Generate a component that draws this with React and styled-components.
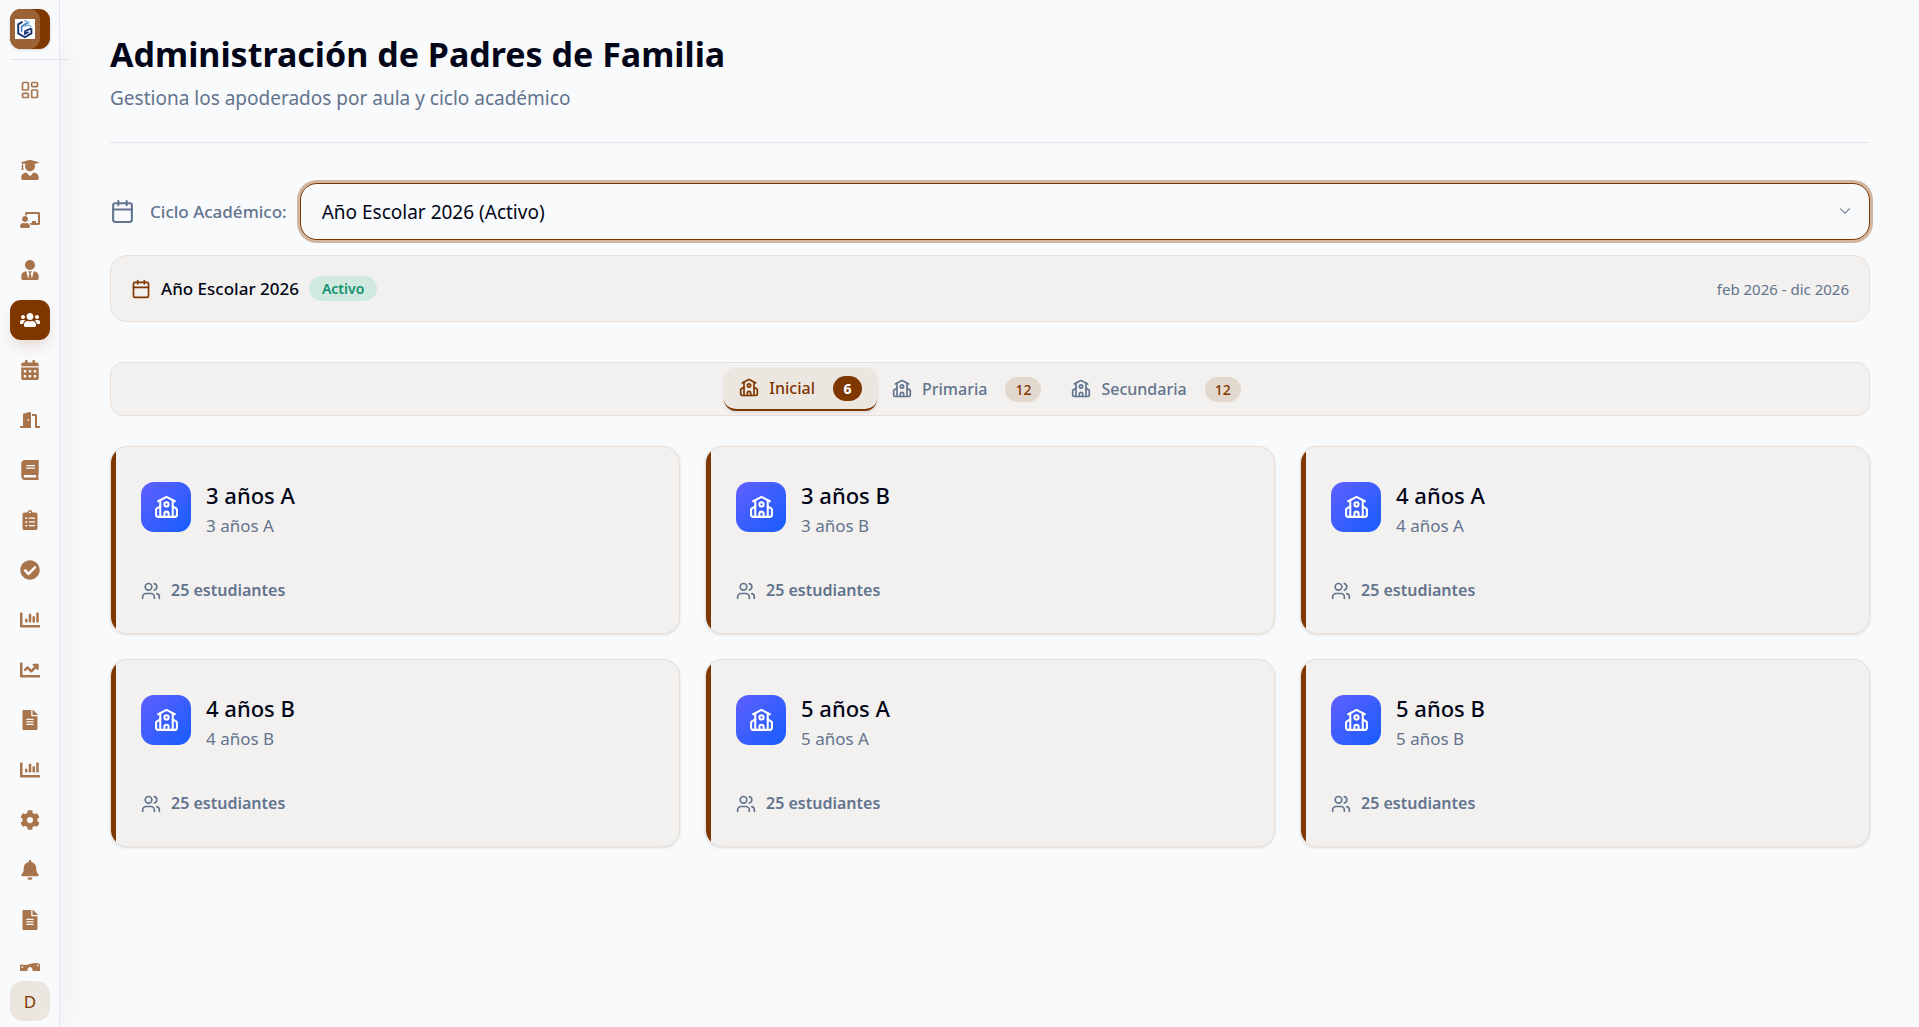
import React, { useState } from "react";
import styled, { createGlobalStyle, css } from "styled-components";
import { Calendar, ChevronDown, LayoutDashboard, School, Users } from "lucide-react";
import {
  FaBell,
  FaBook,
  FaCalendarAlt,
  FaChalkboardTeacher,
  FaChartBar,
  FaChartLine,
  FaCheckCircle,
  FaClipboardList,
  FaCog,
  FaDoorOpen,
  FaFileAlt,
  FaMoneyBillWave,
  FaUserGraduate,
  FaUserTie,
  FaUsers,
} from "react-icons/fa";

const color = {
  page: "#f9fafc",
  brand: "#7f3700",
  brandSoft: "#a8744b",
  ink: "#020618",
  muted: "#62748e",
  surface: "#f3f1ef",
  surfaceActive: "#ece6e0",
  line: "#e9dfd7",
  rule: "#e2e5ea",
};

const GlobalStyle = createGlobalStyle`
  *, *::before, *::after { box-sizing: border-box; }
  body {
    margin: 0;
    background: ${color.page};
    color: ${color.ink};
    font-family: "Noto Sans", "Open Sans", sans-serif;
    font-size: 16px;
  }
  h1, h2, p { margin: 0; }
  button, select { font: inherit; color: inherit; }
`;

const Shell = styled.div`
  display: flex;
  height: 100vh;
  overflow: hidden;
`;

const Sidebar = styled.aside`
  display: flex;
  flex-direction: column;
  flex: none;
  width: 60px;
  padding: 9px 9px 6px 10px;
  border-right: 1px solid ${color.rule};
  box-shadow: 0 25px 50px -12px rgba(0, 0, 0, 0.1);
`;

const Brand = styled.a`
  display: flex;
  flex: none;
  width: 40px;
  height: 40px;
  border-radius: 11px;
  background: ${color.brand};
  box-shadow: 0 1px 3px rgba(0, 0, 0, 0.15);
  overflow: hidden;
`;

const BrandPlate = styled.span`
  display: flex;
  align-items: center;
  justify-content: center;
  width: 30px;
  height: 40px;
  border-radius: 11px;
  background: #9b6335;
`;

const BrandRule = styled.hr`
  flex: none;
  width: 59px;
  height: 1px;
  margin: 10px 0 0;
  border: 0;
  background: ${color.rule};
`;

const Nav = styled.nav`
  display: flex;
  flex-direction: column;
  flex: 1;
  gap: 10px;
  min-height: 0;
  margin: 10px -9px 10px -10px;
  padding: 0 10px;
  overflow: hidden;
`;

const NavLink = styled.a`
  display: flex;
  align-items: center;
  justify-content: center;
  flex: none;
  width: 40px;
  height: 40px;
  margin-bottom: ${(p) => (p.$spaced ? "30px" : "0")};
  border-radius: 11px;
  color: ${color.brandSoft};
  ${(p) =>
    p.$active &&
    css`
      background: ${color.brand};
      color: #fff;
      box-shadow: 0 8px 14px -2px rgba(127, 55, 0, 0.16);
    `}
`;

const Avatar = styled.button`
  flex: none;
  width: 40px;
  height: 40px;
  padding: 0;
  border: 0;
  border-radius: 13px;
  background: ${color.surfaceActive};
  color: ${color.brand};
  font-size: 17px;
`;

const Main = styled.main`
  flex: 1;
  min-width: 0;
  padding: 32px 49px 32px 50px;
  overflow: auto;
`;

const Header = styled.header`
  padding-bottom: 30px;
  border-bottom: 1px solid ${color.rule};
`;

const Title = styled.h1`
  font-size: 34px;
  font-weight: 700;
  line-height: 44px;
`;

const Subtitle = styled.p`
  margin-top: 8px;
  color: ${color.muted};
  font-size: 19px;
  line-height: 28px;
`;

const CycleRow = styled.div`
  display: flex;
  align-items: center;
  gap: 13px;
  margin-top: 40px;
`;

const CycleLabel = styled.label`
  display: flex;
  align-items: center;
  gap: 15px;
  color: ${color.muted};
  font-size: 17px;
  font-weight: 500;
  white-space: nowrap;
`;

const SelectBox = styled.div`
  position: relative;
  flex: 1;
  color: ${color.muted};

  svg {
    position: absolute;
    top: 19px;
    right: 16px;
    opacity: 0.8;
    pointer-events: none;
  }
`;

const Select = styled.select`
  display: block;
  width: 100%;
  height: 57px;
  padding: 0 48px 0 21px;
  appearance: none;
  border: 1px solid ${color.brand};
  border-radius: 17px;
  outline: none;
  background: ${color.page};
  color: ${color.ink};
  font-size: 19px;
  box-shadow: 0 0 0 3px #d0b5a0;
`;

const CycleCard = styled.section`
  display: flex;
  align-items: center;
  gap: 10px;
  height: 67px;
  margin-top: 15px;
  padding: 0 20px;
  border: 1px solid ${color.line};
  border-radius: 17px;
  background: ${color.surface};

  > svg {
    color: ${color.brand};
  }
`;

const CycleName = styled.h2`
  font-size: 17px;
  font-weight: 500;
`;

const Status = styled.span`
  padding: 0 13px;
  border-radius: 13px;
  background: #d0eae0;
  color: #12906e;
  font-size: 14px;
  font-weight: 600;
  line-height: 25px;
`;

const Period = styled.p`
  margin-left: auto;
  color: ${color.muted};
  font-size: 15px;
`;

const Tabs = styled.div`
  display: flex;
  align-items: center;
  justify-content: center;
  height: 54px;
  margin-top: 40px;
  border: 1px solid ${color.line};
  border-radius: 13px;
  background: ${color.surface};
`;

const Tab = styled.button`
  display: flex;
  align-items: center;
  gap: 10px;
  height: 43px;
  padding: 0 15px;
  border: 0;
  border-radius: 12px;
  background: transparent;
  color: ${color.muted};
  font-size: 16px;
  font-weight: 500;
  ${(p) =>
    p.$active &&
    css`
      border-bottom: 2px solid ${color.brand};
      background: ${color.surfaceActive};
      color: ${color.brand};
      box-shadow: 0 1px 3px rgba(0, 0, 0, 0.12);
    `}
`;

const Count = styled.span`
  min-width: 29px;
  margin-left: 8px;
  padding: 0 10px;
  border-radius: 13px;
  background: ${(p) => (p.$active ? color.brand : "#e3d8cd")};
  color: ${(p) => (p.$active ? "#fff" : color.brand)};
  font-size: 14px;
  font-weight: ${(p) => (p.$active ? 700 : 500)};
  line-height: 25px;
`;

const Grid = styled.div`
  display: grid;
  grid-template-columns: repeat(3, 1fr);
  gap: 25px;
  margin-top: 30px;
`;

const Card = styled.article`
  position: relative;
  padding: 29px 29px 30px 30px;
  border: 1px solid ${color.line};
  border-radius: 17px;
  background: ${color.surface};
  box-shadow: 0 1px 3px rgba(0, 0, 0, 0.12);
  overflow: hidden;

  &::before {
    content: "";
    position: absolute;
    inset: 0 auto 0 0;
    width: 5px;
    background: ${color.brand};
  }
`;

const CardHead = styled.div`
  display: flex;
  align-items: center;
  gap: 15px;
  padding-bottom: 19px;
  border-bottom: 1px solid #eeeeed;
`;

const CardIcon = styled.span`
  display: flex;
  align-items: center;
  justify-content: center;
  width: 50px;
  height: 50px;
  border-radius: 13px;
  background: linear-gradient(135deg, #615fff, #155dfc);
  color: #fff;
`;

const CardTitle = styled.h2`
  font-size: 22px;
  font-weight: 500;
  line-height: 38px;
`;

const CardSub = styled.p`
  color: ${color.muted};
  font-size: 17px;
  line-height: 24px;
`;

const CardFoot = styled.p`
  display: flex;
  align-items: center;
  gap: 10px;
  margin-top: 20px;
  color: ${color.muted};
  font-size: 16px;
  font-weight: 600;
  line-height: 25px;
`;

const NAV = [
  ["Alumnos", FaUserGraduate],
  ["Docentes", FaChalkboardTeacher],
  ["Personal", FaUserTie],
  ["Padres de Familia", FaUsers],
  ["Horarios", FaCalendarAlt],
  ["Aulas", FaDoorOpen],
  ["Cursos", FaBook],
  ["Matrículas", FaClipboardList],
  ["Asistencia", FaCheckCircle],
  ["Notas", FaChartBar],
  ["Progreso", FaChartLine],
  ["Documentos", FaFileAlt],
  ["Estadísticas", FaChartBar],
  ["Configuración", FaCog],
  ["Notificaciones", FaBell],
  ["Informes", FaFileAlt],
  ["Pagos", FaMoneyBillWave],
];

const LEVELS = [
  ["Inicial", 6],
  ["Primaria", 12],
  ["Secundaria", 12],
];

const ROOMS = ["3 años A", "3 años B", "4 años A", "4 años B", "5 años A", "5 años B"];

const Logo = () => (
  <svg width="20" height="20" viewBox="0 0 20 20" fill="none" aria-hidden="true">
    <rect width="20" height="20" fill="#fff" />
    <path d="M7.6 2.8 3.2 5.4v9l6.6 3.8 6.6-3.8V9.6" stroke="#12326f" strokeWidth="1.9" />
    <path d="M6.6 12.8V7.4L13 3.6" stroke="#3f7fc4" strokeWidth="1.7" />
    <path d="M9.2 2.2 10.4 1.6l4.4 2.6" stroke="#7fb6e0" strokeWidth="1.5" />
    <path d="M9.6 7.6 13 5.8l3.4 1.8" stroke="#7fb6e0" strokeWidth="1.6" />
    <path d="M16.4 9.2 10 12.2v2.6l3.6-1.8" stroke="#12326f" strokeWidth="1.8" />
  </svg>
);

export default function App() {
  const [level, setLevel] = useState("Inicial");

  return (
    <>
      <GlobalStyle />
      <Shell>
        <Sidebar>
          <Brand href="#inicio" aria-label="Inicio">
            <BrandPlate>
              <Logo />
            </BrandPlate>
          </Brand>
          <BrandRule />
          <Nav aria-label="Principal">
            <NavLink href="#panel" aria-label="Panel" $spaced>
              <LayoutDashboard size={20} strokeWidth={2} />
            </NavLink>
            {NAV.map(([name, Icon]) => (
              <NavLink
                key={name}
                href="#seccion"
                aria-label={name}
                $active={name === "Padres de Familia"}
              >
                <Icon size={20} />
              </NavLink>
            ))}
          </Nav>
          <Avatar type="button">D</Avatar>
        </Sidebar>

        <Main>
          <Header>
            <Title>Administración de Padres de Familia</Title>
            <Subtitle>Gestiona los apoderados por aula y ciclo académico</Subtitle>
          </Header>

          <CycleRow>
            <CycleLabel htmlFor="ciclo">
              <Calendar size={25} />
              Ciclo Académico:
            </CycleLabel>
            <SelectBox>
              <Select id="ciclo" defaultValue="2026">
                <option value="2026">Año Escolar 2026 (Activo)</option>
              </Select>
              <ChevronDown size={18} strokeWidth={1.5} />
            </SelectBox>
          </CycleRow>

          <CycleCard>
            <Calendar size={20} />
            <CycleName>Año Escolar 2026</CycleName>
            <Status>Activo</Status>
            <Period>feb 2026 - dic 2026</Period>
          </CycleCard>

          <Tabs role="tablist">
            {LEVELS.map(([name, count]) => (
              <Tab
                key={name}
                type="button"
                role="tab"
                aria-selected={name === level}
                $active={name === level}
                onClick={() => setLevel(name)}
              >
                <School size={20} />
                {name}
                <Count $active={name === level}>{count}</Count>
              </Tab>
            ))}
          </Tabs>

          <Grid>
            {ROOMS.map((room) => (
              <Card key={room}>
                <CardHead>
                  <CardIcon>
                    <School size={25} />
                  </CardIcon>
                  <div>
                    <CardTitle>{room}</CardTitle>
                    <CardSub>{room}</CardSub>
                  </div>
                </CardHead>
                <CardFoot>
                  <Users size={20} />
                  25 estudiantes
                </CardFoot>
              </Card>
            ))}
          </Grid>
        </Main>
      </Shell>
    </>
  );
}
